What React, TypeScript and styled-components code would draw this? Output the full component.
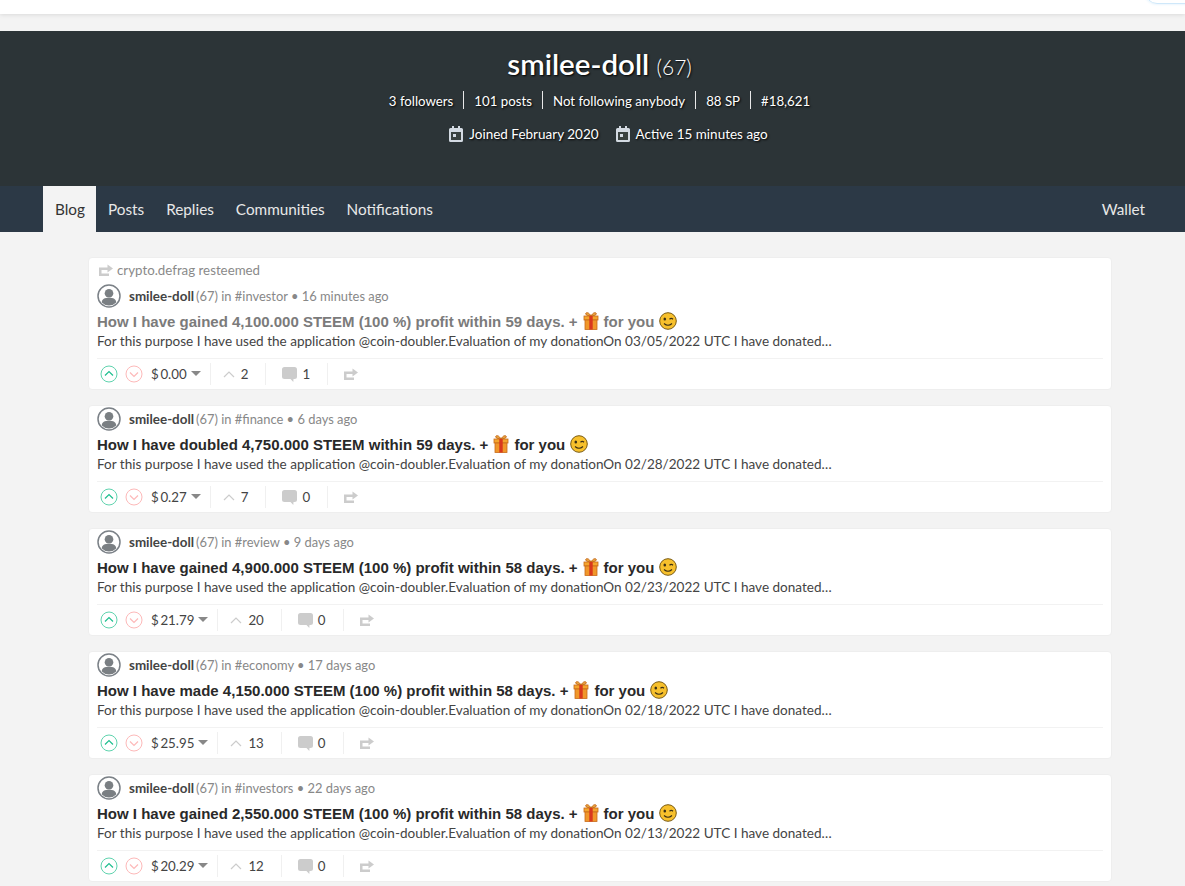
import React from 'react'
import styled, { createGlobalStyle } from 'styled-components'

const GlobalStyle = createGlobalStyle`
  html, body {
    margin: 0;
    padding: 0;
    background: #f3f3f3;
    overflow: hidden;
  }
  body {
    font-family: "Lato", "Noto Sans", sans-serif;
    color: #2c2c2c;
  }
`

interface Post {
  tag: string
  age: string
  title: string
  date: string
  payout: string
  votes: number
  comments: number
  resteemedBy?: string
}

const posts: Post[] = [
  {
    tag: 'investor',
    age: '16 minutes ago',
    title: 'How I have gained 4,100.000 STEEM (100 %) profit within 59 days. +',
    date: '03/05/2022',
    payout: '0.00',
    votes: 2,
    comments: 1,
    resteemedBy: 'crypto.defrag',
  },
  {
    tag: 'finance',
    age: '6 days ago',
    title: 'How I have doubled 4,750.000 STEEM within 59 days. +',
    date: '02/28/2022',
    payout: '0.27',
    votes: 7,
    comments: 0,
  },
  {
    tag: 'review',
    age: '9 days ago',
    title: 'How I have gained 4,900.000 STEEM (100 %) profit within 58 days. +',
    date: '02/23/2022',
    payout: '21.79',
    votes: 20,
    comments: 0,
  },
  {
    tag: 'economy',
    age: '17 days ago',
    title: 'How I have made 4,150.000 STEEM (100 %) profit within 58 days. +',
    date: '02/18/2022',
    payout: '25.95',
    votes: 13,
    comments: 0,
  },
  {
    tag: 'investors',
    age: '22 days ago',
    title: 'How I have gained 2,550.000 STEEM (100 %) profit within 58 days. +',
    date: '02/13/2022',
    payout: '20.29',
    votes: 12,
    comments: 0,
  },
]

const CalendarIcon = () => (
  <svg width="14" height="16" viewBox="0 0 14 16">
    <path d="M3 0h2v2h4V0h2v2h1.500A1.500 1.500 0 0 1 14 3.500v11a1.500 1.500 0 0 1-1.500 1.500h-11A1.500 1.500 0 0 1 0 14.500v-11A1.500 1.500 0 0 1 1.500 2H3z" fill="#d3dae2" />
    <rect x="2" y="6" width="10" height="8" fill="#39413f" />
    <rect x="4" y="8" width="3" height="3" fill="#d3dae2" />
  </svg>
)

const ResteemIcon = () => (
  <svg width="14" height="12" viewBox="0 0 14 12">
    <path d="M0 3.500h8.500V0.500L14 4.500 8.500 8.500V6H2.500v3.500H10V12H0z" fill="#cccccc" />
  </svg>
)

const Avatar = () => (
  <svg width="24" height="24" viewBox="0 0 24 24">
    <circle cx="12" cy="12" r="11" fill="#fff" stroke="#7b8187" strokeWidth="1.500" />
    <circle cx="12" cy="9.300" r="4.300" fill="#7a7f83" />
    <path d="M4.800 18.500c0-3.500 3-4.700 7.200-4.700s7.200 1.200 7.200 4.700a10 10 0 0 1-14.400 0z" fill="#7a7f83" />
  </svg>
)

const VoteIcon = ({ down }: { down?: boolean }) => (
  <svg width="18" height="18" viewBox="0 0 18 18">
    <circle cx="9" cy="9" r="8" fill="none" stroke={down ? '#fdb9b9' : '#5fd3ae'} strokeWidth="1" />
    <path
      d={down ? 'M5 7.500l4 4 4-4' : 'M5 10.500l4-4 4 4'}
      fill="none"
      stroke={down ? '#fdb9b9' : '#1fbf8f'}
      strokeWidth="1.200"
    />
  </svg>
)

const CommentIcon = () => (
  <svg width="15" height="15" viewBox="0 0 15 15">
    <path d="M2.500 0h10A2.500 2.500 0 0 1 15 2.500v7a2.500 2.500 0 0 1-2.500 2.500H11.500l-.2 3-2.800-3h-6A2.500 2.500 0 0 1 0 9.500v-7A2.500 2.500 0 0 1 2.500 0z" fill="#cccccc" />
  </svg>
)

const GiftIcon = () => (
  <svg width="16" height="18" viewBox="0 0 16 18">
    <path d="M8 4C6 .5 3.500 0 2.800 1.300 2 2.800 5 4 8 4zm0 0c2-3.500 4.500-4 5.200-2.700C14 2.800 11 4 8 4z" fill="#e8a33d" stroke="#c76a1b" strokeWidth="1" />
    <rect x="1" y="4" width="14" height="4" fill="#f4a52e" stroke="#c76a1b" strokeWidth=".8" />
    <rect x="2" y="8" width="12" height="9.500" fill="#f0972a" stroke="#c76a1b" strokeWidth=".8" />
    <rect x="6.300" y="4" width="3.400" height="13.500" fill="#d9381e" />
  </svg>
)

const WinkIcon = () => (
  <svg width="18" height="18" viewBox="0 0 18 18">
    <circle cx="9" cy="9" r="8.300" fill="#f7c02c" stroke="#7a5a10" strokeWidth="1" />
    <ellipse cx="5.800" cy="7" rx="1.300" ry="1.600" fill="#3b2f14" />
    <path d="M10.500 7.200q1.800-1.600 3.500 0" fill="none" stroke="#3b2f14" strokeWidth="1.200" />
    <path d="M5 11.500q4 3.500 8 0" fill="none" stroke="#3b2f14" strokeWidth="1.200" />
  </svg>
)

const PostCard = ({ post }: { post: Post }) => (
  <Card>
    {post.resteemedBy && (
      <ResteemLine>
        <ResteemIcon />
        {post.resteemedBy} resteemed
      </ResteemLine>
    )}
    <AuthorLine>
      <Avatar />
      <AuthorName>smilee-doll</AuthorName>
      <Muted>(67) in #{post.tag} • {post.age}</Muted>
    </AuthorLine>
    <Title $faded={!!post.resteemedBy}>
      {post.title}
      <GiftIcon />
      for you
      <WinkIcon />
    </Title>
    <Summary>
      For this purpose I have used the application @coin-doubler.Evaluation of my donationOn {post.date} UTC I have donated…
    </Summary>
    <Footer>
      <VoteGroup>
        <VoteIcon />
        <VoteIcon down />
        <Payout>
          ${'\u2009'}{post.payout}
          <Caret />
        </Payout>
      </VoteGroup>
      <VotesCell>
        <svg width="12" height="7" viewBox="0 0 12 7">
          <path d="M1 6l5-5 5 5" fill="none" stroke="#cccccc" strokeWidth="1.200" />
        </svg>
        {post.votes}
      </VotesCell>
      <CommentsCell>
        <CommentIcon />
        {post.comments}
      </CommentsCell>
      <ShareCell>
        <ResteemIcon />
      </ShareCell>
    </Footer>
  </Card>
)

const App: React.FC = () => (
  <>
    <GlobalStyle />
    <TopBar>
      <SearchEdge />
    </TopBar>
    <Hero>
      <Name>
        smilee-doll <Rep>(67)</Rep>
      </Name>
      <Stats>
        <Stat>3 followers</Stat>
        <Stat>101 posts</Stat>
        <Stat>Not following anybody</Stat>
        <Stat>88 SP</Stat>
        <Stat>#18,621</Stat>
      </Stats>
      <Dates>
        <DateItem>
          <CalendarIcon />
          Joined February 2020
        </DateItem>
        <DateItem>
          <CalendarIcon />
          Active 15 minutes ago
        </DateItem>
      </Dates>
    </Hero>
    <Tabs>
      <Tab $active>Blog</Tab>
      <Tab>Posts</Tab>
      <Tab>Replies</Tab>
      <Tab>Communities</Tab>
      <Tab>Notifications</Tab>
      <Wallet>Wallet</Wallet>
    </Tabs>
    <Feed>
      {posts.map((post) => (
        <PostCard key={post.tag} post={post} />
      ))}
    </Feed>
  </>
)

const TopBar = styled.header`
  position: relative;
  height: 14px;
  background: #fff;
  box-shadow: 0 1px 4px rgba(0, 0, 0, 0.1);
  margin-bottom: 17px;
  overflow: hidden;
`
const SearchEdge = styled.div`
  position: absolute;
  right: -30px;
  top: -30px;
  width: 68px;
  height: 32px;
  border: 1px solid #cfe8fa;
  border-radius: 12px;
  box-shadow: 0 0 3px #d7ecfb;
`
const Hero = styled.section`
  height: 155px;
  box-sizing: border-box;
  padding: 15px 0 0 14px;
  background: #2c3437;
  color: #fff;
  text-align: center;
  text-shadow: 1px 1px 2px #000;
`
const Name = styled.h1`
  margin: 0;
  font-size: 29.500px;
  line-height: 36px;
  font-weight: 600;
`
const Rep = styled.span`
  font-size: 21px;
  font-weight: 300;
`
const Stats = styled.div`
  display: flex;
  justify-content: center;
  margin-top: 6px;
  height: 18px;
`
const Stat = styled.span`
  padding: 0 10px;
  font-size: 13.250px;
  line-height: 20px;
  border-left: 1px solid #e8e8e8;
  &:first-child {
    border-left: 0;
  }
`
const Dates = styled.div`
  display: flex;
  justify-content: center;
  gap: 17px;
  margin-top: 16px;
  padding-left: 18px;
`
const DateItem = styled.span`
  display: flex;
  align-items: center;
  gap: 6px;
  font-size: 13.500px;
  line-height: 18px;
`
const Tabs = styled.nav`
  display: flex;
  height: 46px;
  padding: 0 29px 0 43px;
  background: #2c3946;
`
const Tab = styled.a<{ $active?: boolean }>`
  display: flex;
  align-items: center;
  padding: 0 11px;
  font-size: 15.300px;
  color: ${(p) => (p.$active ? '#333' : '#e8e8e8')};
  background: ${(p) => (p.$active ? '#f3f3f3' : 'transparent')};
  &:first-child {
    padding: 0 11px 0 12px;
    margin-right: 1px;
  }
`
const Wallet = styled(Tab)`
  margin-left: auto;
`
const Feed = styled.main`
  display: flex;
  flex-direction: column;
  gap: 15px;
  width: 1024px;
  margin: 25px 0 0 88px;
`
const Card = styled.article`
  box-sizing: border-box;
  padding: 0 8px;
  background: #fff;
  border: 1px solid #eeeeee;
  border-radius: 4px;
`
const ResteemLine = styled.div`
  display: flex;
  align-items: center;
  gap: 4px;
  padding: 0 0 1px 2px;
  height: 24px;
  font-size: 13.300px;
  color: #8a8a8a;
`
const AuthorLine = styled.div`
  display: flex;
  align-items: center;
  height: 26px;
`
const AuthorName = styled.span`
  margin-left: 8px;
  font-size: 13.400px;
  font-weight: 700;
  color: #444;
`
const Muted = styled.span`
  margin-left: 2px;
  font-size: 12.900px;
  color: #888;
`
const Title = styled.h2<{ $faded: boolean }>`
  display: flex;
  align-items: center;
  gap: 5px;
  margin: 1px 0 0;
  height: 22px;
  font-family: "Liberation Sans", Arial, sans-serif;
  font-size: 15px;
  font-weight: 700;
  color: ${(p) => (p.$faded ? '#7b7b7b' : '#292929')};
`
const Summary = styled.p`
  margin: 0;
  font-size: 13.550px;
  line-height: 18px;
  color: #444;
  white-space: nowrap;
`
const Footer = styled.div`
  display: flex;
  align-items: center;
  height: 30px;
  margin-top: 8px;
  border-top: 1px solid #f2f2f2;
  font-size: 13.300px;
  color: #444;
`
const Cell = styled.div`
  display: flex;
  align-items: center;
  height: 22px;
  gap: 6px;
  border-right: 1px solid #f0f0f0;
`
const VoteGroup = styled(Cell)`
  gap: 7px;
  padding: 0 9px 0 3px;
`
const Payout = styled.span`
  display: flex;
  align-items: center;
  gap: 4px;
  margin-left: 1px;
`
const Caret = styled.i`
  width: 0;
  height: 0;
  margin-bottom: 2px;
  border: 5px solid transparent;
  border-top-color: #888;
  border-bottom: 0;
`
const VotesCell = styled(Cell)`
  padding: 0 17px 0 12px;
`
const CommentsCell = styled(Cell)`
  gap: 5px;
  padding: 0 17px 0 16px;
`
const ShareCell = styled(Cell)`
  padding: 0 16px;
  border-right: 0;
`

export default App
